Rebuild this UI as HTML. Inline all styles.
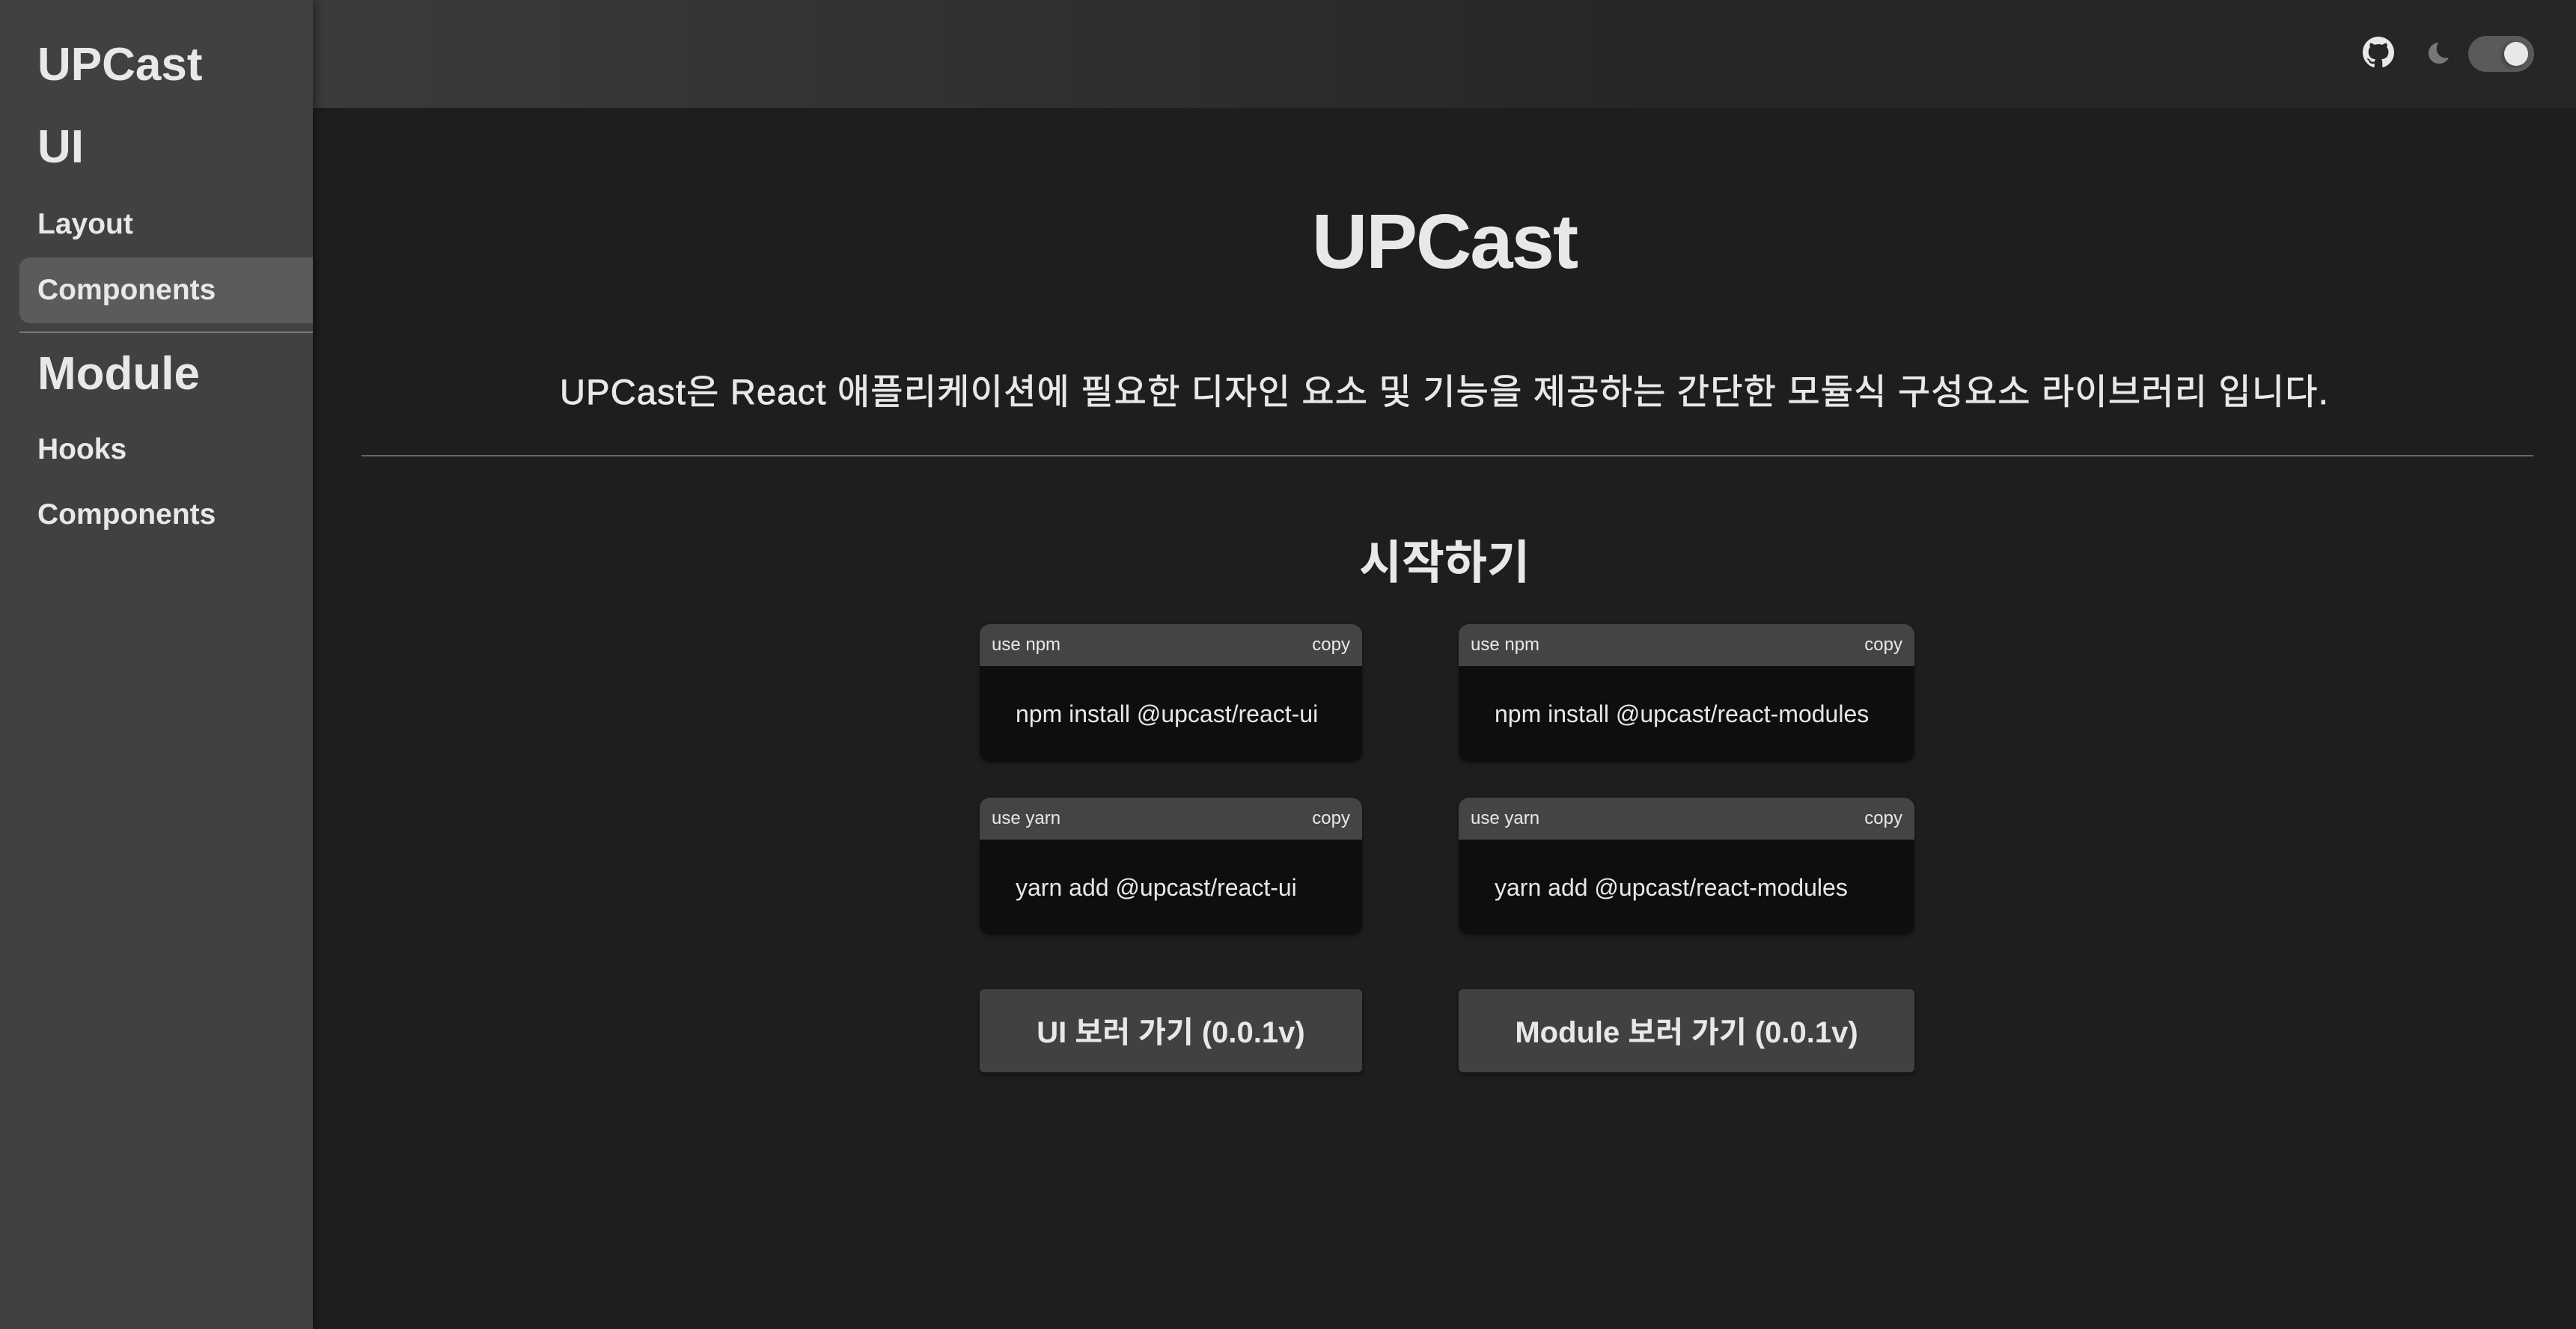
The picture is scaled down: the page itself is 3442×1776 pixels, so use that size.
<!DOCTYPE html>
<html><head><meta charset="utf-8"><style>
*{margin:0;padding:0;box-sizing:border-box}
html,body{width:3442px;height:1776px;overflow:hidden;background:#1e1e1e;color:#e8e8e8;font-family:"Liberation Sans","Noto Sans CJK KR",sans-serif}
.a{position:absolute;white-space:nowrap;line-height:1}
#side{position:absolute;left:0;top:0;width:418px;height:1776px;background:#414141;box-shadow:4px 0 10px rgba(0,0,0,.35);z-index:2}
#side .a{font-weight:bold}
#head{position:absolute;left:418px;top:0;width:3024px;height:144px;background:linear-gradient(90deg,#3b3b3b,#262626 60%,#262626)}
.card{position:absolute;border-radius:14px;overflow:hidden;background:#0e0e0e;box-shadow:0 2px 6px rgba(0,0,0,.4)}
.ch{height:56px;background:#444;display:flex;justify-content:space-between;align-items:center;padding:0 16px;font-size:24px}
.cb{height:128px;display:flex;align-items:center;padding-left:48px;font-size:32px}
.btn{position:absolute;background:#414141;border-radius:6px;display:flex;align-items:center;justify-content:center;font-weight:bold;font-size:40px;box-shadow:0 3px 6px rgba(0,0,0,.5)}
</style></head><body>
<div id="head"></div>
<div id="side">
<div class="a" style="left:50px;top:56px;font-size:62px">UPCast</div>
<div class="a" style="left:50px;top:166px;font-size:62px">UI</div>
<div class="a" style="left:50px;top:280px;font-size:39px">Layout</div>
<div style="position:absolute;left:26px;top:344px;width:392px;height:88px;background:#5b5b5b;border-radius:14px 0 0 14px"></div>
<div class="a" style="left:50px;top:368px;font-size:39px">Components</div>
<div style="position:absolute;left:26px;top:443px;width:392px;height:2px;background:#777"></div>
<div class="a" style="left:50px;top:469px;font-size:62px">Module</div>
<div class="a" style="left:50px;top:581px;font-size:39px">Hooks</div>
<div class="a" style="left:50px;top:668px;font-size:39px">Components</div>
</div>
<svg style="position:absolute;left:3157px;top:49px" width="42" height="42" viewBox="0 0 16 16"><path fill="#e8e8e8" d="M8 0C3.58 0 0 3.58 0 8c0 3.54 2.29 6.530 5.47 7.590.4.07.55-.17.55-.38 0-.19-.01-.82-.01-1.49-2.01.37-2.53-.49-2.69-.94-.09-.23-.48-.94-.82-1.130-.28-.15-.68-.52-.01-.53.63-.01 1.08.58 1.23.82.72 1.21 1.87.87 2.33.66.07-.52.28-.87.51-1.070-1.78-.2-3.64-.89-3.64-3.950 0-.87.31-1.590.82-2.150-.08-.2-.36-1.020.08-2.120 0 0 .67-.21 2.2.82.64-.18 1.32-.27 2-.27.68 0 1.36.09 2 .27 1.53-1.04 2.2-.82 2.2-.82.44 1.1.16 1.92.08 2.12.51.56.82 1.27.82 2.15 0 3.07-1.87 3.75-3.65 3.95.29.25.54.73.54 1.48 0 1.07-.01 1.93-.01 2.2 0 .21.15.46.55.38A8.013 8.013 0 0016 8c0-4.42-3.58-8-8-8z"/></svg>
<svg style="position:absolute;left:3237px;top:51px" width="40" height="40" viewBox="0 0 24 24"><path fill="#777" d="M13 3.5A8.5 8.5 0 1 0 21 15.5 7.5 7.5 0 0 1 13 3.5z"/></svg>
<div style="position:absolute;left:3298px;top:48px;width:88px;height:48px;border-radius:24px;background:#5a5a5a"></div>
<div style="position:absolute;left:3346px;top:56px;width:32px;height:32px;border-radius:50%;background:#e8e8e8;box-shadow:-3px 2px 6px rgba(0,0,0,.3)"></div>
<div class="a" style="left:418px;width:3024px;text-align:center;top:271px;font-size:103px;font-weight:bold;letter-spacing:-2px">UPCast</div>
<div class="a" style="left:418px;width:3024px;text-align:center;top:500px;font-size:47px;letter-spacing:1.2px;-webkit-text-stroke:0.8px #e8e8e8">UPCast은 React 애플리케이션에 필요한 디자인 요소 및 기능을 제공하는 간단한 모듈식 구성요소 라이브러리 입니다.</div>
<div style="position:absolute;left:483px;top:608px;width:2902px;height:2px;background:#666"></div>
<div class="a" style="left:418px;width:3024px;text-align:center;top:722px;font-size:62px;font-weight:bold">시작하기</div>
<div class="card" style="left:1309px;top:834px;width:511px;height:184px"><div class="ch"><span>use npm</span><span>copy</span></div><div class="cb">npm install @upcast/react-ui</div></div>
<div class="card" style="left:1949px;top:834px;width:609px;height:184px"><div class="ch"><span>use npm</span><span>copy</span></div><div class="cb">npm install @upcast/react-modules</div></div>
<div class="card" style="left:1309px;top:1066px;width:511px;height:183px"><div class="ch"><span>use yarn</span><span>copy</span></div><div class="cb">yarn add @upcast/react-ui</div></div>
<div class="card" style="left:1949px;top:1066px;width:609px;height:183px"><div class="ch"><span>use yarn</span><span>copy</span></div><div class="cb">yarn add @upcast/react-modules</div></div>
<div class="btn" style="left:1309px;top:1322px;width:511px;height:111px;padding-bottom:4px">UI 보러 가기 (0.0.1v)</div>
<div class="btn" style="left:1949px;top:1322px;width:609px;height:111px;padding-bottom:4px">Module 보러 가기 (0.0.1v)</div>
</body></html>
